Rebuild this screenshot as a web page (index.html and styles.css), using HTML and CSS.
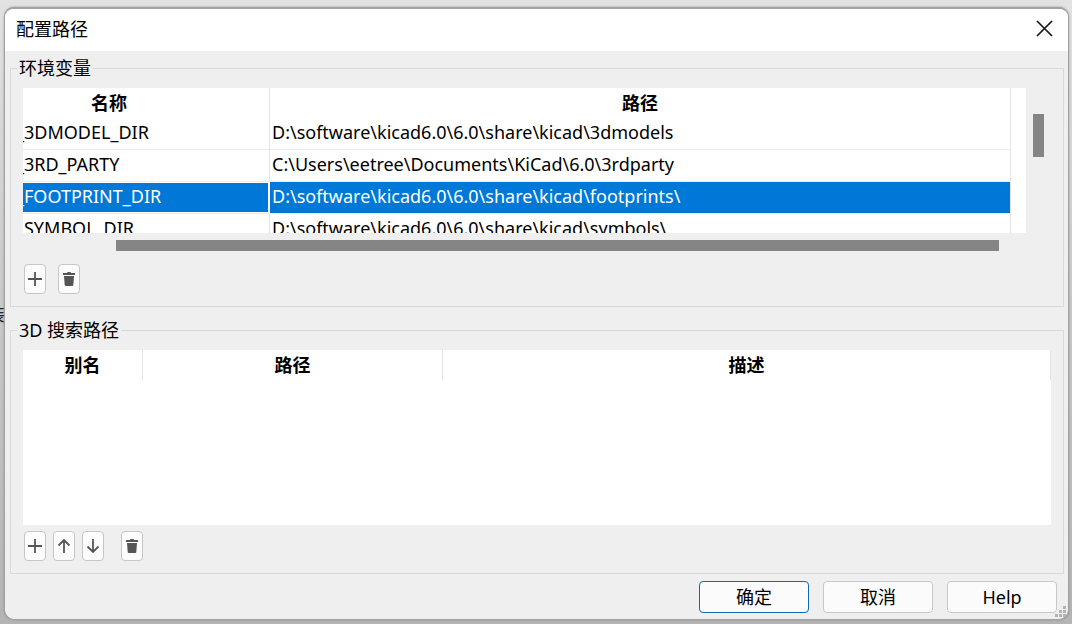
FILE: index.html
```html
<!DOCTYPE html>
<html lang="zh-CN">
<head>
<meta charset="utf-8">
<title>配置路径</title>
<link rel="stylesheet" href="styles.css">
</head>
<body>
<span class="behind">装</span>
<main class="dialog">
  <header class="titlebar">
    <h1 class="title">配置路径</h1>
    <button class="close" type="button" aria-label="关闭">
      <svg width="17" height="17" viewBox="0 0 17 17"><path d="M1 1 16 16M16 1 1 16" fill="none" stroke="#111" stroke-width="1.6"/></svg>
    </button>
  </header>
  <div class="content">
    <fieldset class="group">
      <legend>环境变量</legend>
      <div class="env-view">
        <div class="viewport">
          <table class="grid env">
            <colgroup><col class="env-name"><col></colgroup>
            <thead><tr><th>名称</th><th>路径</th></tr></thead>
            <tbody>
              <tr><td>_3DMODEL_DIR</td><td>D:\software\kicad6.0\6.0\share\kicad\3dmodels</td></tr>
              <tr><td>_3RD_PARTY</td><td>C:\Users\eetree\Documents\KiCad\6.0\3rdparty</td></tr>
              <tr class="selected"><td>_FOOTPRINT_DIR</td><td>D:\software\kicad6.0\6.0\share\kicad\footprints\</td></tr>
              <tr><td>_SYMBOL_DIR</td><td>D:\software\kicad6.0\6.0\share\kicad\symbols\</td></tr>
            </tbody>
          </table>
        </div>
        <div class="vbar"><div class="vthumb"></div></div>
        <div class="hbar"><div class="hthumb"></div></div>
      </div>
      <div class="tools env-tools">
        <button class="tool" type="button" aria-label="添加"><svg width="16" height="16" viewBox="0 0 16 16"><path d="M8 1V15M1 8H15" fill="none" stroke="#555" stroke-width="1.8"/></svg></button>
        <button class="tool" type="button" aria-label="删除"><svg width="16" height="16" viewBox="0 0 16 16"><path d="M2 2H6L6.5 1H9.500L10 2H14V4H2ZM3 5H13L12.300 14Q12.200 15 11.200 15H4.800Q3.800 15 3.700 14Z" fill="#555"/></svg></button>
      </div>
    </fieldset>
    <fieldset class="group">
      <legend>3D 搜索路径</legend>
      <div class="search-view">
        <table class="grid search">
          <colgroup><col class="alias"><col class="path"><col></colgroup>
          <thead><tr><th>别名</th><th>路径</th><th>描述</th></tr></thead>
        </table>
      </div>
      <div class="tools">
        <button class="tool" type="button" aria-label="添加"><svg width="16" height="16" viewBox="0 0 16 16"><path d="M8 1V15M1 8H15" fill="none" stroke="#555" stroke-width="1.8"/></svg></button>
        <button class="tool" type="button" aria-label="上移"><svg width="16" height="16" viewBox="0 0 16 16"><path d="M8 15V2M2.500 7.500 8 2 13.500 7.500" fill="none" stroke="#555" stroke-width="1.8"/></svg></button>
        <button class="tool" type="button" aria-label="下移"><svg width="16" height="16" viewBox="0 0 16 16"><path d="M8 1V14M2.500 8.500 8 14 13.500 8.500" fill="none" stroke="#555" stroke-width="1.8"/></svg></button>
        <button class="tool delete" type="button" aria-label="删除"><svg width="16" height="16" viewBox="0 0 16 16"><path d="M2 2H6L6.500 1H9.500L10 2H14V4H2ZM3 5H13L12.300 14Q12.200 15 11.200 15H4.800Q3.800 15 3.700 14Z" fill="#555"/></svg></button>
      </div>
    </fieldset>
  </div>
  <footer class="actions">
    <button class="action primary" type="button">确定</button>
    <button class="action" type="button">取消</button>
    <button class="action" type="button">Help</button>
  </footer>
  <svg class="grip" width="12" height="12" viewBox="0 0 12 12"><path d="M8 0h3v3h-3zM4 4h3v3h-3zM8 4h3v3h-3zM0 8h3v3h-3zM4 8h3v3h-3zM8 8h3v3h-3z" fill="#b4b4b4"/></svg>
</main>
</body>
</html>
```
FILE: styles.css
```css
* { box-sizing: border-box; }
body {
  margin: 0;
  min-height: 100vh;
  padding: 7px 3px 4px 4px;
  display: flex;
  overflow: hidden;
  background: linear-gradient(#e2e2e2, #c8c8c8 50%, #b4b4b4);
  color: #000;
  font: 18px/24px "Noto Sans", "Noto Sans CJK SC", sans-serif;
}
button { font: inherit; color: inherit; padding: 0; }
.behind {
  position: absolute;
  left: -13px;
  top: 302px;
  color: #1c2430;
}
.dialog {
  position: relative;
  flex: 1;
  display: flex;
  flex-direction: column;
  border: 1px solid #a2a2a2;
  border-top-width: 2px;
  border-radius: 10px;
  background: #efefef;
  box-shadow: 0 0 2px #888;
  overflow: hidden;
}
.titlebar {
  display: flex;
  align-items: center;
  justify-content: space-between;
  height: 42px;
  padding: 0 15px 3px 11px;
  background: #fff;
}
.title { margin: 0; font-size: 18px; font-weight: 400; }
.close { display: flex; border: 0; background: none; }
.content {
  flex: 1;
  display: flex;
  flex-direction: column;
  gap: 11px;
  padding: 5px 4px 0 5px;
}
.group {
  min-width: 0;
  margin: 0;
  padding: 8px 12px 12px;
  border: 1px solid #d9d9d9;
}
.group:last-child { flex: 1; }
legend { margin-left: -6px; padding: 0 2px; }
.env-view {
  display: grid;
  grid-template-columns: 1fr 25px;
  grid-template-rows: 145px 18px;
}
.viewport { overflow: hidden; background: #fff; padding-right: 15px; }
.grid { width: 100%; table-layout: fixed; border-collapse: separate; border-spacing: 0; background: #fff; }
.env-name { width: 247px; }
.alias { width: 120px; }
.path { width: 300px; }
th, td { padding: 0 2px; border-right: 1px solid #e4e4e4; white-space: nowrap; overflow: hidden; }
th { height: 30px; font-weight: 700; }
td { height: 32px; padding-bottom: 3px; border-bottom: 1px solid #ececec; }
.env th:first-child { padding-right: 76px; }
.env td:first-child { padding-left: 0; text-indent: -7px; }
.selected td { background: #0078d7; color: #fff; }
.selected td:first-child { border-right: 2px solid #fff; box-shadow: inset 0 1px #fff, inset 0 -1px #fff; }
.vbar { padding: 26px 7px 0; }
.vthumb { width: 11px; height: 43px; background: #858585; }
.hbar { grid-column: 1 / -1; padding: 7px 52px 0 93px; }
.hthumb { height: 11px; background: #858585; }
.search-view { height: 175px; background: #fff; }
.tools { display: flex; gap: 7px; margin: 6px 0 0 1px; }
.env-tools { gap: 12px; margin-top: 13px; }
.tool {
  display: flex;
  align-items: center;
  justify-content: center;
  width: 22px;
  height: 30px;
  border: 1px solid #c6c6c6;
  border-radius: 4px;
  background: #fcfcfc;
}
.tool svg { flex: none; }
.delete { margin-left: 10px; }
.actions {
  display: flex;
  justify-content: flex-end;
  gap: 14px;
  padding: 7px 11px 6px;
}
.action {
  width: 110px;
  height: 32px;
  border: 1px solid #c8c8c8;
  border-radius: 4px;
  background: #fbfbfb;
}
.primary { border-color: #1068b0; }
.grip { position: absolute; right: 1px; bottom: 1px; }
```
